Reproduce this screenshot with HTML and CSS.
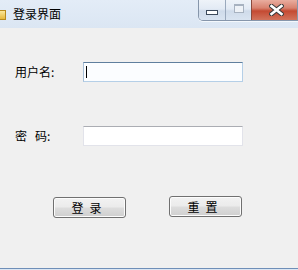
FILE: index.html
```html
<!DOCTYPE html>
<html>
<head>
<meta charset="utf-8">
<link rel="stylesheet" href="styles.css">
</head>
<body>
<div class="window">
  <div class="titlebar">
    <div class="app-icon"></div>
    <div class="title">登录界面</div>
    <div class="caption">
      <div class="cbtn min"><span class="min-glyph"></span></div>
      <div class="cbtn max"><span class="max-glyph"></span></div>
      <div class="cbtn close">
        <svg width="15" height="12" viewBox="0 0 15 12">
          <path d="M2.5 2 L12.5 10 M12.5 2 L2.5 10" stroke="#3a3a3a" stroke-width="4.6" stroke-linecap="square"/>
          <path d="M2.5 2 L12.5 10 M12.5 2 L2.5 10" stroke="#ffffff" stroke-width="2.6" stroke-linecap="square"/>
        </svg>
      </div>
    </div>
  </div>
  <div class="client">
    <div class="row row-user">
      <div class="label">用户名:</div>
      <div class="textbox focused"><span class="caret"></span></div>
    </div>
    <div class="row row-pass">
      <div class="label label-pass"><span>密</span><span>码:</span></div>
      <div class="textbox"></div>
    </div>
    <div class="buttons">
      <div class="btn btn-login">登录</div>
      <div class="btn btn-reset">重置</div>
    </div>
  </div>
  <div class="bottom-border"></div>
</div>
</body>
</html>
```

FILE: styles.css
```css
html, body {
  margin: 0;
  padding: 0;
  width: 298px;
  height: 270px;
  overflow: hidden;
  background: #f0f0f0;
}

.window {
  width: 298px;
  height: 270px;
  display: flex;
  flex-direction: column;
  font-family: "Noto Sans CJK SC", "Noto Sans", sans-serif;
  font-size: 12px;
  color: #000;
}

.titlebar {
  height: 28px;
  flex: none;
  display: flex;
  align-items: flex-start;
  background: linear-gradient(#e3ecf7, #dbe6f3);
  position: relative;
}

.app-icon {
  width: 6px;
  height: 10px;
  margin-top: 10px;
  background: linear-gradient(#fbe79a, #e6b83c);
  border: 1px solid #b88a1e;
  border-left: none;
  box-sizing: border-box;
}

.title {
  margin-left: 7px;
  margin-top: 5px;
  line-height: 18px;
  font-size: 12px;
  color: #000;
}

.caption {
  margin-left: auto;
  display: flex;
  height: 20px;
  border: 1px solid #8696ab;
  border-top: none;
  border-radius: 0 0 0 5px;
  overflow: hidden;
  box-shadow: 0 1px 0 #f4f8fc;
}

.cbtn {
  height: 20px;
  display: flex;
  align-items: center;
  justify-content: center;
  box-sizing: border-box;
}

.min, .max {
  width: 27px;
  background: linear-gradient(#eef3f9 0%, #e2eaf4 45%, #cfdbea 55%, #d9e4f1 100%);
}

.min {
  border-right: 1px solid #9aa9bd;
}

.max {
  width: 26px;
  border-right: 1px solid #8b4a3c;
}

.min-glyph {
  width: 10px;
  height: 3px;
  border: 1px solid #3d4b5c;
  background: #fff;
  margin-top: 5px;
}

.max-glyph {
  width: 8px;
  height: 6px;
  border: 1px solid #a7b2c0;
  border-top-width: 2px;
  background: #eef2f7;
  margin-top: -4px;
}

.close {
  width: 45px;
  background: linear-gradient(#e9ad9f 0%, #d8826f 40%, #c44a32 55%, #d2735c 100%);
  padding-left: 4px;
  padding-top: 0;
}

.client {
  flex: 1;
  background: #f0f0f0;
  padding-left: 15px;
  display: flex;
  flex-direction: column;
}

.row {
  display: flex;
  align-items: center;
  height: 20px;
}

.row-user {
  margin-top: 34px;
}

.row-pass {
  margin-top: 44px;
}

.label {
  width: 68px;
  flex: none;
  line-height: 20px;
  font-size: 12px;
}

.label-pass {
  display: flex;
  gap: 8px;
}

.textbox {
  width: 160px;
  height: 20px;
  box-sizing: border-box;
  background: #fff;
  border: 1px solid #e2e3ea;
  border-top-color: #abadb3;
  position: relative;
}

.textbox.focused {
  background: #fbfdff;
  border-color: #b5cfe7;
  border-top-color: #5f7f9e;
  border-left-color: #a8c0d8;
}

.caret {
  position: absolute;
  left: 2px;
  top: 3px;
  width: 1px;
  height: 12px;
  background: #000;
}

.buttons {
  display: flex;
  margin-top: 51px;
  margin-left: 38px;
  gap: 43px;
}

.btn {
  width: 73px;
  height: 21px;
  box-sizing: border-box;
  border: 1px solid #707070;
  border-radius: 3px;
  background: linear-gradient(#f2f2f2 0%, #ebebeb 48%, #dddddd 52%, #cfcfcf 100%);
  box-shadow: inset 0 0 0 1px #fcfcfc;
  display: flex;
  align-items: center;
  justify-content: center;
  letter-spacing: 6px;
  line-height: 18px;
  font-size: 12px;
}

.btn-reset {
  margin-top: -1px;
}

.bottom-border {
  height: 2px;
  flex: none;
  background: linear-gradient(#6f8fb8 0 1px, #dbe6f3 1px);
}
```
